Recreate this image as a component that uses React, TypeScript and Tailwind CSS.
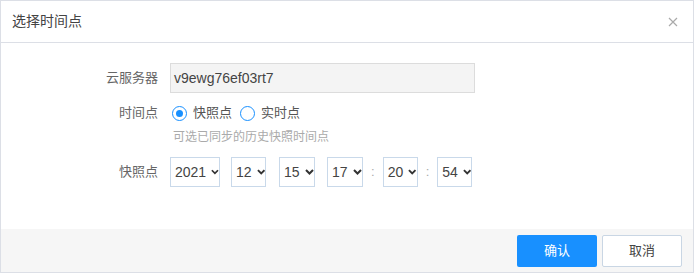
import React from "react";

const Chevron = () => (
  <svg width="9" height="6" viewBox="0 0 9 6" className="ml-[5px]">
    <path d="M1 1 L4.5 4.5 L8 1" stroke="#333" strokeWidth="2" fill="none" />
  </svg>
);

const Sel = ({ v, w }: { v: string; w: string }) => (
  <div className={`h-[30px] ${w} border border-[#c9d9ea] flex items-center pl-[4px] text-[14px] text-[#444] shrink-0`}>
    <span>{v}</span>
    <Chevron />
  </div>
);

export default function App() {
  return (
    <div
      className="w-[694px] h-[273px] border border-[#dcdfe6] bg-white flex flex-col text-[#333]"
      style={{ fontFamily: '"Liberation Sans", "Noto Sans CJK SC", sans-serif' }}
    >
      <div className="h-[42px] shrink-0 border-b border-[#dcdfe6] flex items-center justify-between pl-[11px] pr-[15px]">
        <span className="text-[14px] text-[#444]">选择时间点</span>
        <svg width="10" height="10" viewBox="0 0 10 10">
          <path d="M1 1 L9 9 M9 1 L1 9" stroke="#aaa" strokeWidth="1.2" />
        </svg>
      </div>
      <div className="flex-1 pt-[20px] text-[13px]">
        <div className="flex items-center h-[30px]">
          <div className="w-[157px] text-right text-[#666]">云服务器</div>
          <div className="ml-[12px] w-[305px] h-[30px] bg-[#f4f4f4] border border-[#dcdcdc] flex items-center pl-[3px] text-[14px] text-[#444]">
            v9ewg76ef03rt7
          </div>
        </div>
        <div className="flex items-center h-[30px] mt-[5px]">
          <div className="w-[157px] text-right text-[#666]">时间点</div>
          <div className="ml-[14px] flex items-center">
            <span className="w-[15px] h-[15px] rounded-full border border-[#1890ff] flex items-center justify-center">
              <span className="w-[7px] h-[7px] rounded-full bg-[#1890ff]" />
            </span>
            <span className="ml-[6px] text-[13px] text-[#555]">快照点</span>
            <span className="ml-[8px] w-[15px] h-[15px] rounded-full border border-[#1890ff]" />
            <span className="ml-[6px] text-[13px] text-[#555]">实时点</span>
          </div>
        </div>
        <div className="h-[18px] flex items-center pl-[172px] text-[12px] text-[#aaa]">
          可选已同步的历史快照时间点
        </div>
        <div className="flex items-center h-[30px] mt-[11px]">
          <div className="w-[157px] text-right text-[#666]">快照点</div>
          <div className="ml-[12px] flex items-center">
            <Sel v="2021" w="w-[50px]" />
            <div className="ml-[11px]"><Sel v="12" w="w-[35px]" /></div>
            <div className="ml-[13px]"><Sel v="15" w="w-[36px]" /></div>
            <div className="ml-[12px]"><Sel v="17" w="w-[36px]" /></div>
            <span className="mx-[8px] text-[#aaa] text-[13px]">:</span>
            <Sel v="20" w="w-[35px]" />
            <span className="mx-[8px] text-[#aaa] text-[13px]">:</span>
            <Sel v="54" w="w-[35px]" />
          </div>
        </div>
      </div>
      <div className="h-[43px] shrink-0 bg-[#f6f6f6] flex items-center justify-end pr-[11px] gap-[5px]">
        <button className="w-[80px] h-[32px] bg-[#1890ff] text-white text-[13px] rounded-[2px]">确认</button>
        <button className="w-[80px] h-[32px] bg-white border border-[#c9d6e4] text-[#444] text-[13px] rounded-[2px]">取消</button>
      </div>
    </div>
  );
}
